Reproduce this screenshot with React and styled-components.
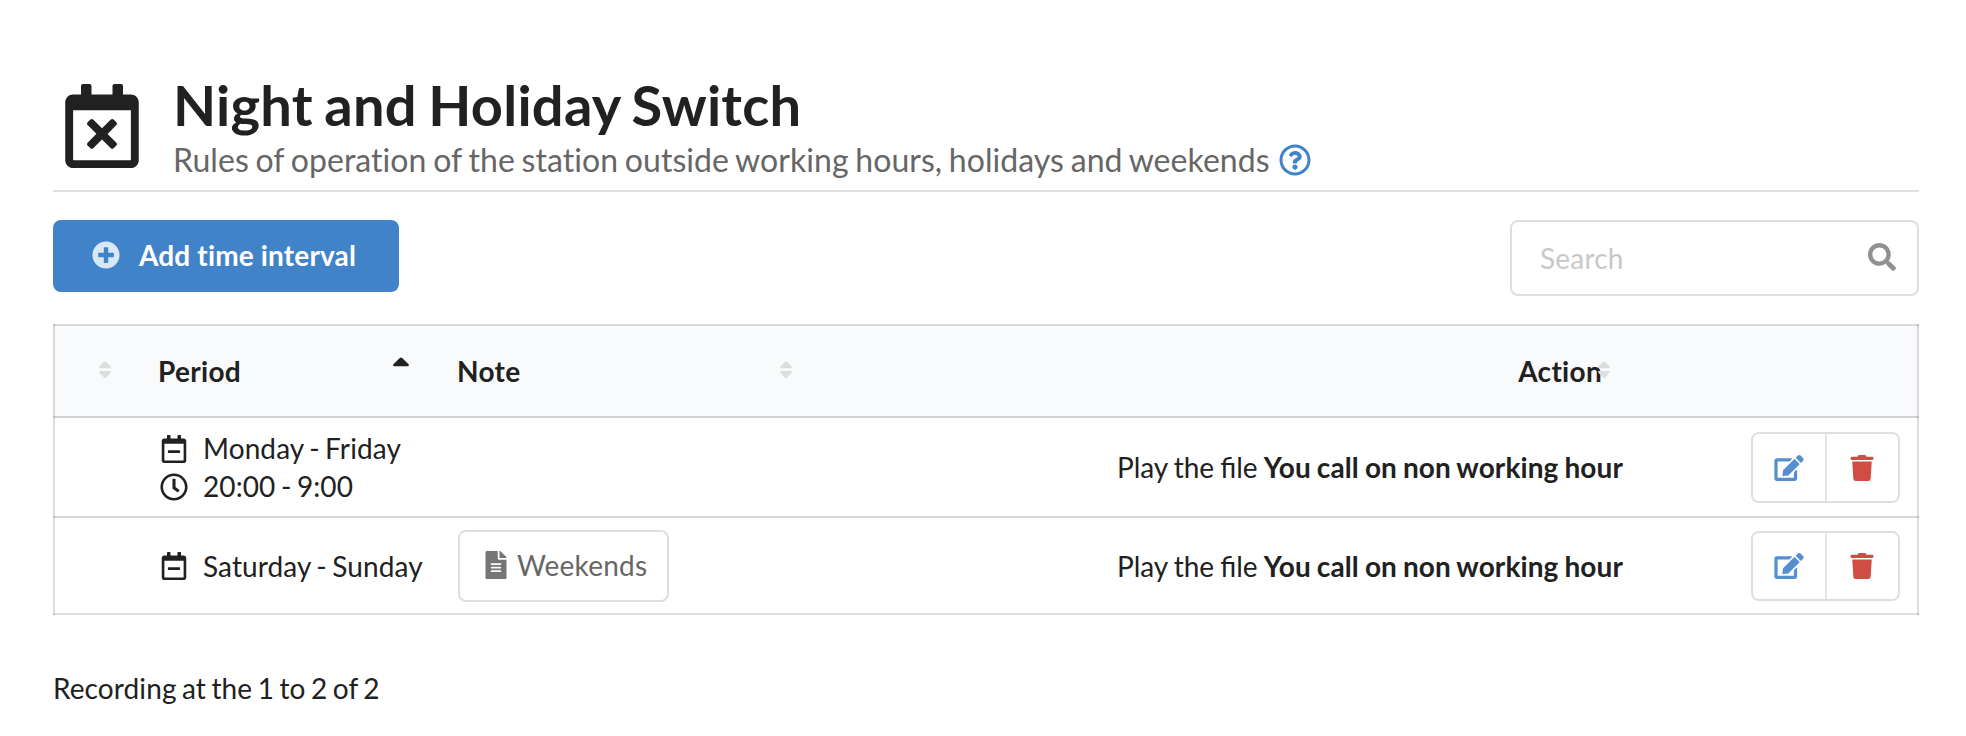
import React from "react";
import styled, { createGlobalStyle } from "styled-components";
import {
  FaRegCalendarTimes,
  FaRegCalendarMinus,
  FaRegClock,
  FaRegQuestionCircle,
  FaPlusCircle,
  FaSearch,
  FaFileAlt,
  FaEdit,
  FaTrash,
} from "react-icons/fa";

const GlobalStyle = createGlobalStyle`
  * { box-sizing: border-box; }
  body {
    margin: 0;
    background: #fff;
    color: #212121;
    font: 28px/38px Lato, "Liberation Sans", sans-serif;
    font-variant-ligatures: none;
    letter-spacing: 0.1px;
    word-spacing: -1.8px;
  }
  svg { display: block; flex: none; }
`;

const LINE = "#dededf";

const Page = styled.main`
  min-height: 736px;
  padding: 70px 47px 0 53px;
`;

const Header = styled.header`
  display: flex;
  height: 122px;
  border-bottom: 2px solid ${LINE};
`;

const HeaderIcon = styled.div`
  width: 120px;
  padding: 14px 0 0 12px;
  svg { height: 84px; width: 74px; }
`;

const Title = styled.h1`
  margin: 0;
  font-size: 56px;
  font-weight: 700;
  line-height: 69px;
  letter-spacing: 0.25px;
  word-spacing: -2.4px;
  white-space: nowrap;
`;

const Subtitle = styled.div`
  display: flex;
  align-items: center;
  gap: 9px;
  padding-top: 1px;
  font-size: 32px;
  line-height: 39px;
  letter-spacing: 0.05px;
  word-spacing: -1.5px;
  color: #666;
  white-space: nowrap;
  svg { color: #4183c9; height: 32px; width: 32px; }
`;

const Toolbar = styled.div`
  display: flex;
  justify-content: space-between;
  align-items: flex-start;
  margin: 28px 0;
`;

const AddButton = styled.button`
  display: flex;
  align-items: center;
  width: 346px;
  height: 72px;
  padding: 0 0 2px 39px;
  gap: 19px;
  border: 0;
  border-radius: 8px;
  background: #4183c9;
  color: #fff;
  font: inherit;
  font-weight: 700;
  letter-spacing: 0.15px;
  white-space: nowrap;
  svg { opacity: 0.8; }
`;

const SearchBox = styled.label`
  display: flex;
  align-items: center;
  width: 409px;
  height: 76px;
  padding: 0 21px 0 28px;
  border: 2px solid ${LINE};
  border-radius: 8px;
  svg { color: #909090; margin-bottom: 2px; }
`;

const SearchInput = styled.input`
  flex: 1;
  min-width: 0;
  padding: 0;
  border: 0;
  outline: 0;
  background: transparent;
  color: inherit;
  font: inherit;
  letter-spacing: 0.2px;
  &::placeholder { color: #c8c8c8; opacity: 1; }
`;

const side = "rgba(34, 36, 38, 0.15)";

const Row = styled.div`
  display: grid;
  grid-template-columns: 105px 299px 366px 1fr 276px;
  align-items: center;
  height: ${(p) => p.$height}px;
  padding-bottom: 2px;
  background: ${(p) => (p.$head ? "#f9fafc" : "#fff")};
  font-weight: ${(p) => (p.$head ? 700 : 400)};
  box-shadow:
    inset 2px 0 ${side},
    inset -2px 0 ${side},
    inset 0 -2px ${(p) => (p.$last ? side : "rgba(34, 36, 38, 0.19)")}
    ${(p) => (p.$head ? `, inset 0 2px ${side}` : "")};
  ${(p) => p.$head && "padding-top: 2px;"}
`;

const HeadCell = styled.div`
  display: flex;
  align-items: center;
  justify-content: ${(p) => p.$justify || "space-between"};
  padding-right: ${(p) => p.$right || 0}px;
  letter-spacing: 0.3px;
  svg { margin-top: -3px; }
`;

const OverlapCaret = styled.span`
  margin-left: -4px;
`;

const PeriodLine = styled.div`
  display: flex;
  align-items: center;
  white-space: nowrap;
`;

const PeriodIcon = styled.span`
  display: flex;
  justify-content: center;
  width: 32px;
  margin-right: 13px;
  padding-top: 1px;
`;

const NoteButton = styled.button`
  display: flex;
  align-items: center;
  gap: 7px;
  width: 211px;
  height: 72px;
  margin-left: 1px;
  padding: 0 0 1px 22px;
  border: 2px solid ${LINE};
  border-radius: 8px;
  background: #fff;
  color: #666;
  font: inherit;
  letter-spacing: 0.2px;
  svg { color: #757575; }
`;

const ActionText = styled.div`
  padding-right: 20px;
  font-variant-ligatures: normal;
  letter-spacing: normal;
  word-spacing: -1.1px;
  text-align: right;
  white-space: nowrap;
  b { letter-spacing: 0.1px; word-spacing: -0.9px; }
`;

const ButtonGroup = styled.div`
  display: flex;
  justify-self: end;
  width: 149px;
  height: ${(p) => p.$height}px;
  margin-right: 19px;
  border: 2px solid ${LINE};
  border-radius: 8px;
  overflow: hidden;
`;

const IconButton = styled.button`
  display: flex;
  align-items: center;
  justify-content: center;
  flex: 1;
  padding: 1px 0 0;
  border: 0;
  background: #fff;
  color: ${(p) => p.$color};
  & + & { border-left: 2px solid #e4e4e5; }
  svg { height: 26px; width: 30px; }
`;

const Footer = styled.div`
  margin-top: 54px;
`;

const SortBoth = () => (
  <svg width="12" height="18" viewBox="0 0 12 18" fill="#dcdddd">
    <path d="M6 .5Q6.6.5 7.2 1L11.7 5.6Q12.3 7.2 11.2 7.2H.8Q-.3 7.2.3 5.6L4.8 1Q5.4.5 6 .5ZM.8 10H11.2Q12.3 10 11.7 11.6L7.2 16.4Q6 17.5 4.8 16.4L.3 11.6Q-.3 10 .8 10Z" />
  </svg>
);

const SortUp = () => (
  <svg width="16" height="26" viewBox="0 0 16 26" fill="#212121">
    <path d="M8 .5Q8.6.5 9.2 1L15.6 7.2Q16.3 9.2 15 9.2H1Q-.3 9.2.4 7.2L6.8 1Q7.4.5 8 .5Z" />
  </svg>
);

const Period = ({ icon: Icon, children }) => (
  <PeriodLine>
    <PeriodIcon><Icon size={28} /></PeriodIcon>
    {children}
  </PeriodLine>
);

const rules = [
  { days: "Monday - Friday", time: "20:00 - 9:00", height: 100, group: 71 },
  { days: "Saturday - Sunday", note: "Weekends", height: 97, group: 70 },
];

export default function App() {
  return (
    <Page>
      <GlobalStyle />
      <Header>
        <HeaderIcon><FaRegCalendarTimes /></HeaderIcon>
        <div>
          <Title>Night and Holiday Switch</Title>
          <Subtitle>
            Rules of operation of the station outside working hours, holidays and weekends
            <FaRegQuestionCircle />
          </Subtitle>
        </div>
      </Header>
      <Toolbar>
        <AddButton><FaPlusCircle size={28} />Add time interval</AddButton>
        <SearchBox>
          <SearchInput placeholder="Search" />
          <FaSearch size={28} />
        </SearchBox>
      </Toolbar>
      <section>
        <Row $head $height={94}>
          <HeadCell $justify="flex-end" $right={47}><SortBoth /></HeadCell>
          <HeadCell $right={48}>Period<SortUp /></HeadCell>
          <HeadCell $right={31}>Note<SortBoth /></HeadCell>
          <HeadCell $justify="flex-end" $right={33}>
            Action<OverlapCaret><SortBoth /></OverlapCaret>
          </HeadCell>
          <div />
        </Row>
        {rules.map((rule, i) => (
          <Row key={rule.days} $height={rule.height} $last={i === rules.length - 1}>
            <div />
            <div>
              <Period icon={FaRegCalendarMinus}>{rule.days}</Period>
              {rule.time && <Period icon={FaRegClock}>{rule.time}</Period>}
            </div>
            <div>
              {rule.note && <NoteButton><FaFileAlt size={28} />{rule.note}</NoteButton>}
            </div>
            <ActionText>Play the file <b>You call on non working hour</b></ActionText>
            <ButtonGroup $height={rule.group}>
              <IconButton $color="#558fd0" aria-label="Edit"><FaEdit /></IconButton>
              <IconButton $color="#cf4d43" aria-label="Delete"><FaTrash /></IconButton>
            </ButtonGroup>
          </Row>
        ))}
      </section>
      <Footer>Recording at the 1 to 2 of 2</Footer>
    </Page>
  );
}
